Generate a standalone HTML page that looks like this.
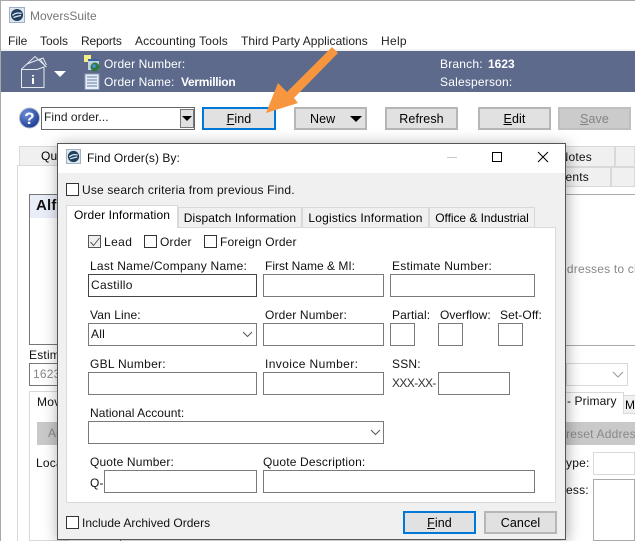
<!DOCTYPE html>
<html><head><meta charset="utf-8"><style>
html,body{margin:0;padding:0;background:#fff}
#r{position:relative;width:635px;height:541px;overflow:hidden;background:#fff;font:12px/14px "Liberation Sans",Arial,sans-serif;color:#111}
#r div,#r svg.a{position:absolute;box-sizing:border-box}
.t{white-space:nowrap;font-size:12px;line-height:14px;letter-spacing:.2px}
.b{background:#e1e1e1;border:2px solid #b6b6b6;text-align:center;line-height:20px;font-size:12.5px;color:#000;letter-spacing:.1px}
.i{background:#fff;border:1px solid #7a7a7a}
.c{background:#fff;border:1px solid #333;width:13px;height:13px}
u{text-decoration:underline}
.tab{background:#f0f0f0;border:1px solid #d9d9d9;text-align:center;font-size:12px;letter-spacing:.2px;white-space:nowrap;line-height:18px;color:#000}
</style></head><body><div id="r">
<div style="left:0;top:0;width:635px;height:1px;background:#a8a8a8"></div>
<div style="left:0;top:0;width:1px;height:541px;background:#a8a8a8"></div>

<svg class="a" style="left:9px;top:7px" width="16" height="16" viewBox="0 0 16 16"><rect x=".5" y=".5" width="15" height="15" fill="#dfe6ee" stroke="#9fb0c4"/><circle cx="8" cy="8" r="6" fill="#1f3f5f"/><path d="M3.500 8.500C6 6 9 5.500 12.500 6.500M4.500 10.500C7 9.500 9 9 12 8.500" stroke="#dfe9f3" stroke-width="1.300" fill="none"/></svg>
<div class="t" style="left:30px;top:9px;color:#777;letter-spacing:0">MoversSuite</div>

<div class="t" style="left:8px;top:34px;color:#222;letter-spacing:0">File</div>
<div class="t" style="left:40px;top:34px;color:#222;letter-spacing:0">Tools</div>
<div class="t" style="left:81px;top:34px;color:#222;letter-spacing:-.2px">Reports</div>
<div class="t" style="left:135px;top:34px;color:#222;letter-spacing:.15px">Accounting Tools</div>
<div class="t" style="left:241px;top:34px;color:#222;letter-spacing:.03px">Third Party Applications</div>
<div class="t" style="left:381px;top:34px;color:#222;letter-spacing:.3px">Help</div>

<div style="left:1px;top:49px;width:634px;height:2px;background:#f2f2f2"></div>
<div style="left:1px;top:51px;width:634px;height:41px;background:#5d6a8c"></div>
<svg class="a" style="left:20px;top:50px" width="48" height="40" viewBox="0 0 48 40" fill="none" stroke="#e6e9f0" stroke-width="1"><path d="M1.500 19L15 6.500L26.500 17"/><path d="M7 14L20 9L25.500 16.500M19 9.500L23 8L26.500 15"/><path d="M1.500 19.500V37.500H24V17L17 19.500Z"/><rect x="12" y="25" width="2" height="1.500" fill="#fff" stroke="none"/><rect x="12" y="28" width="2" height="6" fill="#fff" stroke="none"/><path d="M34 21H46L40 27Z" fill="#fff" stroke="none"/></svg>
<svg class="a" style="left:83px;top:54px" width="18" height="18" viewBox="0 0 18 18"><rect x="1" y="1" width="7" height="7" fill="#f4ee86"/><rect x="5" y="5" width="11" height="11" fill="#c3d0e2"/><rect x="5" y="5" width="11" height="2" fill="#3a62a0"/><circle cx="12" cy="13" r="4.500" fill="#2d7a3e"/><circle cx="11" cy="12" r="1.800" fill="#4c8fd8"/></svg>
<svg class="a" style="left:84px;top:73px" width="16" height="18" viewBox="0 0 16 18"><rect x="1" y="1" width="14" height="15.500" fill="#e9eef6" stroke="#8d9cb8"/><path d="M3 4H13M3 7H13M3 10H13M3 13H13" stroke="#5f7aa3"/></svg>
<div class="t" style="left:104px;top:57px;color:#fff;letter-spacing:.1px">Order Number:</div>
<div class="t" style="left:104px;top:75px;color:#fff;letter-spacing:.1px">Order Name:</div>
<div class="t" style="left:181px;top:75px;color:#fff;font-weight:bold;letter-spacing:-.3px">Vermillion</div>
<div class="t" style="left:440px;top:57px;color:#fff">Branch:</div>
<div class="t" style="left:488px;top:57px;color:#fff;font-weight:bold;letter-spacing:0">1623</div>
<div class="t" style="left:440px;top:75px;color:#fff">Salesperson:</div>

<svg class="a" style="left:19px;top:107px" width="21" height="22" viewBox="0 0 21 22"><defs><radialGradient id="g" cx=".35" cy=".3" r=".8"><stop offset="0" stop-color="#6d90dc"/><stop offset="1" stop-color="#15348c"/></radialGradient></defs><circle cx="10.500" cy="11" r="10" fill="url(#g)" stroke="#b4bccb"/><text x="10.500" y="17" text-anchor="middle" font-family="Liberation Sans" font-weight="bold" font-size="17" fill="#fff">?</text></svg>
<div style="left:41px;top:107px;width:154px;height:23px;background:#fff;border:1px solid #666"></div>
<div class="t" style="left:44px;top:110px;color:#222;letter-spacing:.05px">Find order...</div>
<div style="left:180px;top:109px;width:14px;height:19px;background:#e1e1e1;border:1px solid #777"></div>
<div style="left:182px;top:116px;width:0;height:0;border:5px solid transparent;border-top:5px solid #000;border-bottom:0"></div>

<div class="b" style="left:202px;top:107px;width:74px;height:23px;border-color:#0078d7"><u>F</u>ind</div>
<div class="b" style="left:294px;top:107px;width:73px;height:23px;text-align:left;padding-left:14px">New</div>
<div style="left:350px;top:116px;width:0;height:0;border:6px solid transparent;border-top:6px solid #000;border-bottom:0"></div>
<div class="b" style="left:385px;top:107px;width:73px;height:23px">Refresh</div>
<div class="b" style="left:478px;top:107px;width:73px;height:23px"><u>E</u>dit</div>
<div class="b" style="left:558px;top:107px;width:73px;height:23px;background:#cbcbcb;border-color:#c0c0c0;color:#838383"><u>S</u>ave</div>

<div style="left:17px;top:165px;width:618px;height:376px;border:1px solid #d9d9d9;border-right:0;border-bottom:0"></div>
<div class="tab" style="left:19px;top:146px;width:50px;height:20px;text-align:left;text-indent:21px">Quote</div>
<div class="tab" style="left:540px;top:146px;width:75px;height:21px"></div>
<div class="t" style="right:43px;top:150px">Notes</div>
<div class="tab" style="left:615px;top:146px;width:20px;height:21px"></div>
<div class="tab" style="left:540px;top:167px;width:71px;height:20px"></div>
<div class="t" style="right:46px;top:170px">Comments</div>
<div class="tab" style="left:611px;top:167px;width:24px;height:20px"></div>
<div style="left:566px;top:194px;width:69px;height:1px;background:#aaa"></div>

<div style="left:29px;top:194px;width:40px;height:151px;border:1px solid #777;background:#fff"></div>
<div style="left:30px;top:195px;width:38px;height:23px;background:#e9edf8"></div>
<div class="t" style="left:36px;top:197px;font-size:15px;line-height:18px;font-weight:bold;letter-spacing:.2px">Alford</div>
<div class="t" style="left:29px;top:348px">Estimate</div>
<div style="left:29px;top:363px;width:40px;height:23px;border:1px solid #777;background:#fff"></div>
<div class="t" style="left:33px;top:367px;color:#888">1623</div>
<div style="left:29px;top:391px;width:40px;height:150px;border:1px solid #d9d9d9;background:#fff"></div>
<div class="t" style="left:37px;top:395px">Move</div>
<div style="left:37px;top:422px;width:40px;height:23px;background:#c9c9c9"></div>
<div class="t" style="left:48px;top:426px;color:#888">Add</div>
<div class="t" style="left:36px;top:456px">Location</div>
<div style="left:120px;top:535px;width:1px;height:6px;background:#888"></div>

<div class="t" style="left:560px;top:262px;color:#888">ddresses to change</div>
<div style="left:566px;top:345px;width:69px;height:1px;background:#aaa"></div>
<div style="left:566px;top:363px;width:62px;height:23px;border:1px solid #d9d9d9;background:#fff"></div>
<svg class="a" style="left:612px;top:371px" width="12" height="8" viewBox="0 0 12 8"><path d="M1 1L6 6L11 1" stroke="#999" fill="none"/></svg>
<div style="left:566px;top:392px;width:57px;height:1px;background:#d9d9d9"></div>
<div style="left:623px;top:392px;width:1px;height:22px;background:#d9d9d9"></div>
<div class="t" style="left:567px;top:394px;letter-spacing:.1px">- Primary</div>
<div class="tab" style="left:624px;top:395px;width:11px;height:19px;text-align:left;text-indent:1px;border-right:0;border-left:0">M</div>
<div style="left:566px;top:422px;width:69px;height:23px;background:#c9c9c9"></div>
<div class="t" style="left:566px;top:427px;color:#888">reset Address</div>
<div class="t" style="left:566px;top:456px">ype:</div>
<div class="t" style="left:566px;top:483px">ess:</div>
<div style="left:593px;top:452px;width:42px;height:23px;border:1px solid #d9d9d9;background:#fff"></div>
<div style="left:593px;top:479px;width:42px;height:62px;border:1px solid #aaa;background:#fff"></div>

<svg class="a" style="left:0;top:0" width="635" height="135"><polygon points="266,113 278,83 287,92 332,47 338,53 294,98 298,103" fill="#f7963f"/></svg>

<div style="left:57px;top:143px;width:509px;height:397px;background:#f0f0f0;border:1px solid #555;box-shadow:1px 2px 14px rgba(0,0,0,.35)"></div>
<div style="left:58px;top:144px;width:507px;height:29px;background:#fff"></div>
<svg class="a" style="left:66px;top:149px" width="15" height="15" viewBox="0 0 16 16"><rect x=".5" y=".5" width="15" height="15" fill="#dfe6ee" stroke="#9fb0c4"/><circle cx="8" cy="8" r="6" fill="#1f3f5f"/><path d="M3.500 8.500C6 6 9 5.500 12.500 6.500M4.500 10.500C7 9.500 9 9 12 8.500" stroke="#dfe9f3" stroke-width="1.300" fill="none"/></svg>
<div class="t" style="left:87px;top:151px;letter-spacing:.05px">Find Order(s) By:</div>
<div style="left:447px;top:157px;width:10px;height:1px;background:#c8c8c8"></div>
<div style="left:492px;top:152px;width:10px;height:10px;border:1px solid #000"></div>
<svg class="a" style="left:537px;top:151px" width="12" height="12" viewBox="0 0 12 12"><path d="M1 1L11 11M11 1L1 11" stroke="#000" fill="none"/></svg>

<div class="c" style="left:66px;top:183px"></div>
<div class="t" style="left:82px;top:183px;letter-spacing:.17px">Use search criteria from previous Find.</div>

<div style="left:66px;top:227px;width:490px;height:276px;background:#fff;border:1px solid #d9d9d9"></div>
<div class="tab" style="left:66px;top:205px;width:112px;height:23px;background:#fff;border-bottom:0;line-height:19px;letter-spacing:.12px">Order Information</div>
<div class="tab" style="left:178px;top:207px;width:124px;height:21px;line-height:20px;letter-spacing:.12px">Dispatch Information</div>
<div class="tab" style="left:302px;top:207px;width:127px;height:21px;line-height:20px">Logistics Information</div>
<div class="tab" style="left:429px;top:207px;width:106px;height:21px;line-height:20px;letter-spacing:-.05px">Office &amp; Industrial</div>

<div class="c" style="left:88px;top:235px;border-color:#555;background:#efefef"></div>
<svg class="a" style="left:89px;top:236px" width="12" height="12" viewBox="0 0 12 12"><path d="M1.500 6L4.500 9.500L10.500 2" stroke="#555" fill="none"/></svg>
<div class="t" style="left:104px;top:235px;letter-spacing:.4px">Lead</div>
<div class="c" style="left:144px;top:235px"></div>
<div class="t" style="left:160px;top:235px">Order</div>
<div class="c" style="left:204px;top:235px"></div>
<div class="t" style="left:220px;top:235px;letter-spacing:.15px">Foreign Order</div>

<div class="t" style="left:90px;top:259px;letter-spacing:.25px">Last Name/Company Name:</div>
<div class="t" style="left:265px;top:259px;letter-spacing:0">First Name &amp; MI:</div>
<div class="t" style="left:392px;top:259px;letter-spacing:.25px">Estimate Number:</div>
<div class="i" style="left:88px;top:274px;width:169px;height:23px;border-color:#444"></div>
<div class="t" style="left:91px;top:278px;letter-spacing:.3px">Castillo</div>
<div class="i" style="left:263px;top:274px;width:121px;height:23px"></div>
<div class="i" style="left:390px;top:274px;width:145px;height:23px"></div>

<div class="t" style="left:90px;top:308px;letter-spacing:.1px">Van Line:</div>
<div class="t" style="left:265px;top:308px;letter-spacing:.15px">Order Number:</div>
<div class="t" style="left:392px;top:308px;letter-spacing:.1px">Partial:</div>
<div class="t" style="left:440px;top:308px;letter-spacing:0">Overflow:</div>
<div class="t" style="left:500px;top:308px;letter-spacing:.1px">Set-Off:</div>
<div class="i" style="left:88px;top:323px;width:169px;height:23px"></div>
<div class="t" style="left:91px;top:327px">All</div>
<svg class="a" style="left:242px;top:331px" width="11" height="7" viewBox="0 0 11 7"><path d="M1 1L5.500 5.500L10 1" stroke="#555" fill="none"/></svg>
<div class="i" style="left:263px;top:323px;width:121px;height:23px"></div>
<div class="i" style="left:390px;top:323px;width:25px;height:23px"></div>
<div class="i" style="left:438px;top:323px;width:25px;height:23px"></div>
<div class="i" style="left:498px;top:323px;width:25px;height:23px"></div>

<div class="t" style="left:90px;top:357px;letter-spacing:.27px">GBL Number:</div>
<div class="t" style="left:265px;top:357px;letter-spacing:.4px">Invoice Number:</div>
<div class="t" style="left:392px;top:357px;letter-spacing:.2px">SSN:</div>
<div class="i" style="left:88px;top:372px;width:169px;height:23px"></div>
<div class="i" style="left:263px;top:372px;width:121px;height:23px"></div>
<div class="t" style="left:392px;top:376px;letter-spacing:-.6px;color:#333">XXX-XX-</div>
<div class="i" style="left:438px;top:372px;width:72px;height:23px"></div>

<div class="t" style="left:90px;top:406px;letter-spacing:.05px">National Account:</div>
<div class="i" style="left:88px;top:421px;width:296px;height:23px"></div>
<svg class="a" style="left:370px;top:429px" width="11" height="7" viewBox="0 0 11 7"><path d="M1 1L5.500 5.500L10 1" stroke="#555" fill="none"/></svg>

<div class="t" style="left:90px;top:455px;letter-spacing:.15px">Quote Number:</div>
<div class="t" style="left:263px;top:455px;letter-spacing:.17px">Quote Description:</div>
<div class="t" style="left:90px;top:476px">Q-</div>
<div class="i" style="left:104px;top:470px;width:153px;height:23px"></div>
<div class="i" style="left:263px;top:470px;width:272px;height:23px"></div>

<div class="c" style="left:66px;top:516px"></div>
<div class="t" style="left:82px;top:516px;letter-spacing:0">Include Archived Orders</div>
<div class="b" style="left:403px;top:511px;width:73px;height:23px;border-color:#0078d7"><u>F</u>ind</div>
<div class="b" style="left:484px;top:511px;width:73px;height:23px">Cancel</div>
</div></body></html>
